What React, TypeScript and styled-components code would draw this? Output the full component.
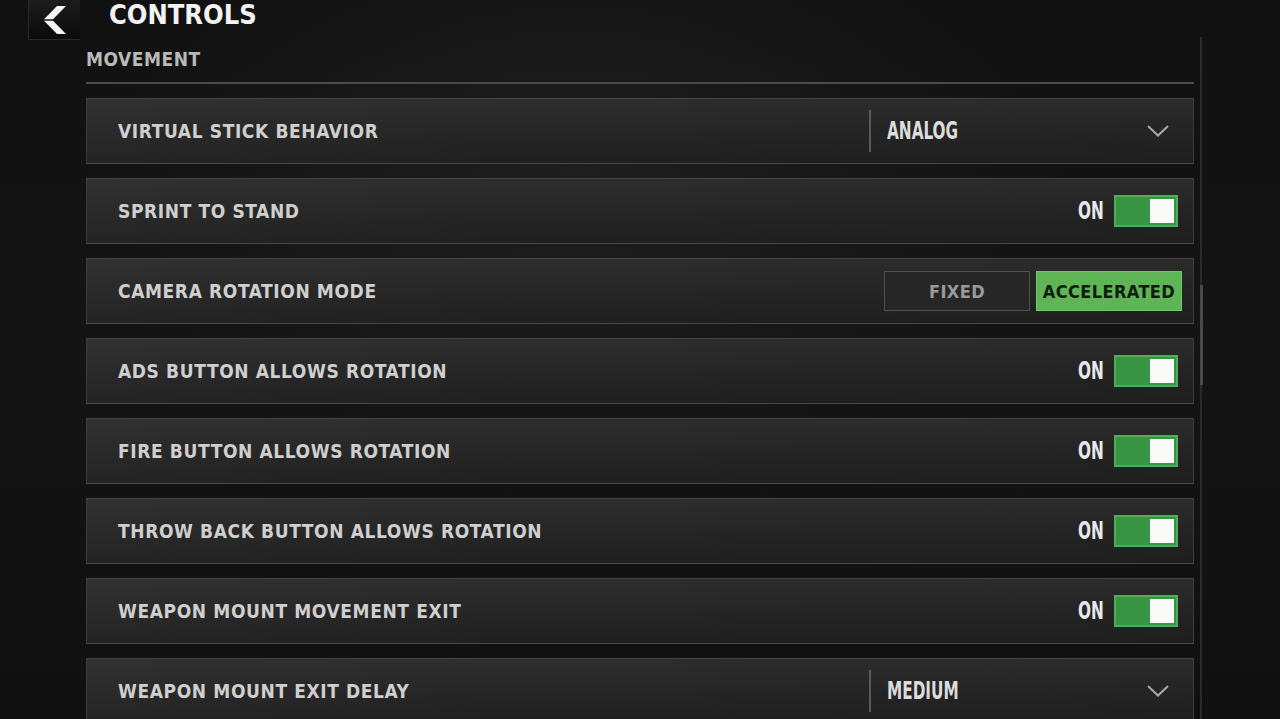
import React from 'react';
import styled, { createGlobalStyle } from 'styled-components';

const GlobalStyle = createGlobalStyle`
  html, body {
    margin: 0;
    padding: 0;
    height: 100%;
    background: #0d0d0d;
    overflow: hidden;
  }
  #root {
    height: 100%;
  }
`;

const labelFont = `'DejaVu Sans Condensed', 'DejaVu Sans', sans-serif`;

type Setting =
  | { kind: 'select'; label: string; value: string }
  | { kind: 'toggle'; label: string; on: boolean }
  | { kind: 'segment'; label: string; options: string[]; active: number };

const settings: Setting[] = [
  { kind: 'select', label: 'VIRTUAL STICK BEHAVIOR', value: 'ANALOG' },
  { kind: 'toggle', label: 'SPRINT TO STAND', on: true },
  { kind: 'segment', label: 'CAMERA ROTATION MODE', options: ['FIXED', 'ACCELERATED'], active: 1 },
  { kind: 'toggle', label: 'ADS BUTTON ALLOWS ROTATION', on: true },
  { kind: 'toggle', label: 'FIRE BUTTON ALLOWS ROTATION', on: true },
  { kind: 'toggle', label: 'THROW BACK BUTTON ALLOWS ROTATION', on: true },
  { kind: 'toggle', label: 'WEAPON MOUNT MOVEMENT EXIT', on: true },
  { kind: 'select', label: 'WEAPON MOUNT EXIT DELAY', value: 'MEDIUM' },
];

const Screen = styled.div`
  height: 100%;
  display: flex;
  flex-direction: column;
  background:
    radial-gradient(ellipse 55% 60% at 45% 25%, rgba(40, 40, 40, 0.55), rgba(0, 0, 0, 0) 70%),
    linear-gradient(180deg, #111 0%, #141414 50%, #101010 100%);
`;

const Header = styled.header`
  height: 37px;
  display: flex;
  align-items: flex-start;
  padding-left: 28px;
  flex-shrink: 0;
`;

const BackButton = styled.button`
  width: 52px;
  height: 40px;
  padding: 0;
  border: none;
  border-left: 1px solid #2a2a2a;
  border-bottom: 1px solid #2a2a2a;
  background: linear-gradient(180deg, #1c1c1c 0%, #0b0b0b 100%);
  display: flex;
  align-items: center;
  justify-content: center;
  position: relative;
  z-index: 1;
`;

const Title = styled.h1`
  margin: 0 0 0 29px;
  font-family: ${labelFont};
  font-weight: bold;
  font-size: 27px;
  line-height: 30px;
  color: #f2f2f2;
`;

const Body = styled.div`
  flex: 1;
  display: flex;
  padding-left: 86px;
  min-height: 0;
`;

const Content = styled.main`
  width: 1108px;
  display: flex;
  flex-direction: column;
`;

const SectionTitle = styled.h2`
  margin: 0;
  padding-top: 11px;
  padding-bottom: 12px;
  font-family: ${labelFont};
  font-weight: bold;
  font-size: 19px;
  line-height: 22px;
  letter-spacing: 0.5px;
  color: #b9b9b9;
  border-bottom: 2px solid #4a4a4a;
`;

const List = styled.div`
  display: flex;
  flex-direction: column;
  gap: 14px;
  padding-top: 14px;
`;

const Row = styled.div`
  height: 66px;
  box-sizing: border-box;
  display: flex;
  align-items: center;
  padding: 0 15px 0 31px;
  border: 1px solid #3d3d3d;
  border-top-color: #454545;
  border-bottom-color: #484848;
  background:
    linear-gradient(90deg, rgba(255, 255, 255, 0.02) 0%, rgba(0, 0, 0, 0) 40%, rgba(0, 0, 0, 0.05) 100%),
    linear-gradient(180deg, #2d2d2d 0%, #252525 55%, #202020 100%);
`;

const Label = styled.span`
  flex: 1;
  font-family: ${labelFont};
  font-weight: bold;
  font-size: 19px;
  letter-spacing: 0.6px;
  color: #cfcfcf;
`;

const SelectBox = styled.div`
  width: 324px;
  align-self: stretch;
  display: flex;
  align-items: center;
  margin-right: -15px;
  padding: 0 24px 0 0;
  box-sizing: border-box;
`;

const Divider = styled.span`
  width: 2px;
  height: 42px;
  background: #5a5a5a;
  margin-right: 16px;
`;

const NarrowText = styled.span<{ $color?: string }>`
  display: inline-block;
  font-family: ${labelFont};
  font-weight: bold;
  font-size: 25px;
  line-height: 28px;
  color: ${({ $color }) => $color ?? '#dcdcdc'};
  transform: scaleX(0.68);
  transform-origin: left center;
`;

const SelectValue = styled.span`
  flex: 1;
  display: flex;
`;

const ToggleWrap = styled.div`
  display: flex;
  align-items: center;
`;

const OnSlot = styled.span`
  width: 36px;
  display: flex;
`;

const Switch = styled.div<{ $on: boolean }>`
  width: 64px;
  height: 32px;
  box-sizing: border-box;
  border: 2px solid ${({ $on }) => ($on ? '#4cae58' : '#555')};
  background: ${({ $on }) => ($on ? '#379443' : '#333')};
  display: flex;
  align-items: center;
  justify-content: ${({ $on }) => ($on ? 'flex-end' : 'flex-start')};
  padding: 0 2px;
`;

const Knob = styled.span`
  width: 24px;
  height: 24px;
  background: #fafafa;
`;

const Segments = styled.div`
  display: flex;
  gap: 6px;
  margin-right: -4px;
`;

const Segment = styled.div<{ $active: boolean }>`
  width: 146px;
  height: 40px;
  box-sizing: border-box;
  display: flex;
  align-items: center;
  justify-content: center;
  font-family: ${labelFont};
  font-weight: bold;
  font-size: 18px;
  letter-spacing: 0.4px;
  color: ${({ $active }) => ($active ? '#0f1d0f' : '#9a9a9a')};
  background: ${({ $active }) => ($active ? '#5fb455' : '#262626')};
  border: 1px solid ${({ $active }) => ($active ? '#74c66a' : '#505050')};
`;

const ScrollTrack = styled.div`
  width: 2px;
  margin-left: 6px;
  background: #2a2a2a;
  display: flex;
  flex-direction: column;
`;

const ScrollThumb = styled.div`
  margin-top: 248px;
  height: 100px;
  width: 3px;
  background: #4a4a4a;
`;

const BackIcon = () => (
  <svg width="24" height="28" viewBox="0 0 24 28">
    <polygon points="1,13.3 14,0 23,0 10,13.3" fill="#f4f4f4" />
    <polygon points="1,14.7 10,14.7 23,28 14,28" fill="#f4f4f4" />
  </svg>
);

const Chevron = () => (
  <svg width="22" height="12" viewBox="0 0 22 12">
    <path d="M1 1 L11 10.5 L21 1" stroke="#a8a8a8" strokeWidth="2" fill="none" />
  </svg>
);

const SettingControl = ({ s }: { s: Setting }) => {
  if (s.kind === 'select') {
    return (
      <SelectBox>
        <Divider />
        <SelectValue>
          <NarrowText>{s.value}</NarrowText>
        </SelectValue>
        <Chevron />
      </SelectBox>
    );
  }
  if (s.kind === 'toggle') {
    return (
      <ToggleWrap>
        <OnSlot>
          <NarrowText $color="#e8e8e8">{s.on ? 'ON' : 'OFF'}</NarrowText>
        </OnSlot>
        <Switch $on={s.on}>
          <Knob />
        </Switch>
      </ToggleWrap>
    );
  }
  return (
    <Segments>
      {s.options.map((o, i) => (
        <Segment key={o} $active={i === s.active}>
          {o}
        </Segment>
      ))}
    </Segments>
  );
};

export default function App() {
  return (
    <>
      <GlobalStyle />
      <Screen>
        <Header>
          <BackButton aria-label="Back">
            <BackIcon />
          </BackButton>
          <Title>CONTROLS</Title>
        </Header>
        <Body>
          <Content>
            <SectionTitle>MOVEMENT</SectionTitle>
            <List>
              {settings.map((s) => (
                <Row key={s.label}>
                  <Label>{s.label}</Label>
                  <SettingControl s={s} />
                </Row>
              ))}
            </List>
          </Content>
          <ScrollTrack>
            <ScrollThumb />
          </ScrollTrack>
        </Body>
      </Screen>
    </>
  );
}
